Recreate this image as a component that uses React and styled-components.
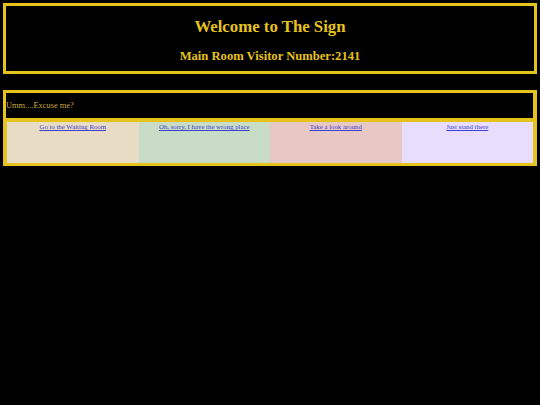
import React from 'react'
import styled, { createGlobalStyle } from 'styled-components'

const Global = createGlobalStyle`
  html, body {
    margin: 0;
    padding: 0;
    background: #000;
  }
  body {
    font-family: "Liberation Serif", "Times New Roman", serif;
    height: 405px;
  }
`

const gold = '#e6c21c'

const Page = styled.div`
  padding: 3px;
  display: flex;
  flex-direction: column;
  gap: 16px;
`

const Header = styled.div`
  box-sizing: border-box;
  border: 3px solid ${gold};
  height: 71px;
  display: flex;
  flex-direction: column;
  align-items: center;
  padding-top: 11px;
`

const Title = styled.h1`
  margin: 0;
  font-size: 16.8px;
  line-height: 20px;
  font-weight: bold;
  color: ${gold};
`

const Counter = styled.h2`
  margin: 12px 0 0;
  font-size: 12.6px;
  line-height: 15px;
  font-weight: bold;
  color: ${gold};
`

const Panel = styled.div`
  border: 3px solid ${gold};
  background: ${gold};
  display: flex;
  flex-direction: column;
  gap: 4px;
  padding-right: 1px;
`

const Prompt = styled.div`
  background: #000;
  color: #c9a83e;
  font-size: 8.4px;
  line-height: 25px;
  height: 25px;
`

const Choices = styled.div`
  display: grid;
  grid-template-columns: repeat(4, 1fr);
  height: 41px;
  margin-left: 1px;
`

const Choice = styled.div`
  background: ${(p) => p.tint};
  text-align: center;
  font-size: 6.8px;
  line-height: 8px;
  padding-top: 1px;
`

const ChoiceLink = styled.a`
  color: #4040d0;
  text-decoration: underline;
`

const choices = [
  { label: 'Go to the Waiting Room', tint: '#e8dcc4' },
  { label: 'Oh, sorry, I have the wrong place', tint: '#c9dcc6' },
  { label: 'Take a look around', tint: '#e8c8c4' },
  { label: 'Just stand there', tint: '#e8defc' },
]

export default function App() {
  return (
    <>
      <Global />
      <Page>
        <Header>
          <Title>Welcome to The Sign</Title>
          <Counter>Main Room Visitor Number:2141</Counter>
        </Header>
        <Panel>
          <Prompt>Umm....Excuse me?</Prompt>
          <Choices>
            {choices.map((c) => (
              <Choice key={c.label} tint={c.tint}>
                <ChoiceLink href="#">{c.label}</ChoiceLink>
              </Choice>
            ))}
          </Choices>
        </Panel>
      </Page>
    </>
  )
}
